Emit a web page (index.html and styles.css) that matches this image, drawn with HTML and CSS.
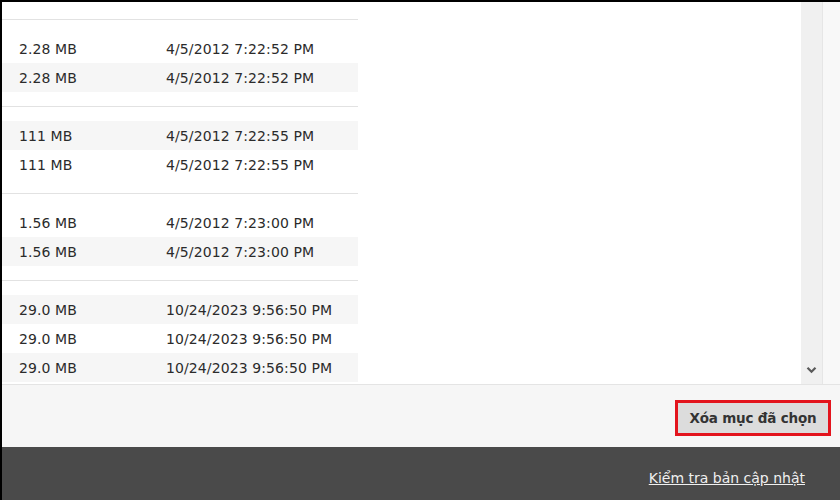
FILE: index.html
```html
<!DOCTYPE html>
<html lang="vi">
<head>
    <meta charset="UTF-8">
    <title>Xóa bản cập nhật</title>
    <link rel="stylesheet" href="styles.css">
</head>
<body>
    <div class="window">
        <div class="list-wrap">
            <div class="list">
                <div class="list-top"></div>

                <div class="group">
                    <div class="row"><span>2.28 MB</span><span>4/5/2012 7:22:52 PM</span></div>
                    <div class="row alt"><span>2.28 MB</span><span>4/5/2012 7:22:52 PM</span></div>
                </div>

                <div class="group">
                    <div class="row alt"><span>111 MB</span><span>4/5/2012 7:22:55 PM</span></div>
                    <div class="row"><span>111 MB</span><span>4/5/2012 7:22:55 PM</span></div>
                </div>

                <div class="group">
                    <div class="row"><span>1.56 MB</span><span>4/5/2012 7:23:00 PM</span></div>
                    <div class="row alt"><span>1.56 MB</span><span>4/5/2012 7:23:00 PM</span></div>
                </div>

                <div class="group last">
                    <div class="row alt"><span>29.0 MB</span><span>10/24/2023 9:56:50 PM</span></div>
                    <div class="row"><span>29.0 MB</span><span>10/24/2023 9:56:50 PM</span></div>
                    <div class="row alt"><span>29.0 MB</span><span>10/24/2023 9:56:50 PM</span></div>
                </div>
            </div>
            <div class="scrollbar">
                <svg class="arrow" width="11" height="8" viewBox="0 0 11 8">
                    <path d="M1.5 1.8 L5.5 5.8 L9.5 1.8" fill="none" stroke="#5a5a5a" stroke-width="2.2"/>
                </svg>
            </div>
        </div>

        <div class="actions">
            <button type="button" class="btn-delete">Xóa mục đã chọn</button>
        </div>

        <div class="footer">
            <a href="#" class="update-link">Kiểm tra bản cập nhật</a>
        </div>
    </div>
</body>
</html>
```

FILE: styles.css
```css
html, body { margin: 0; padding: 0; }
body { width: 840px; height: 500px; overflow: hidden; font-family: "DejaVu Sans", Tahoma, sans-serif; font-size: 14px; color: #2b2b2b; background: #f6f6f6; }

.window { height: 498px; border-top: 2px solid #000; border-left: 2px solid #000; display: flex; flex-direction: column; }

.list-wrap { display: flex; height: 382px; background: #f8f8f8; border-bottom: 1px solid #e4e4e4; }
.list { width: 799px; background: #fff; overflow: hidden; }
.list-top { height: 17px; }

.group { border-top: 1px solid #e2e2e2; width: 356px; padding: 14px 0; }
.group.last { padding-bottom: 0; }

.row { display: grid; grid-template-columns: 147px 1fr; height: 29px; align-items: center; padding-left: 17px; letter-spacing: 0.1px; }
.row.alt { background: #f6f6f6; }

.scrollbar { width: 22px; background: #f0f0f0; border-right: 1px solid #e6e6e6; display: flex; flex-direction: column; justify-content: flex-end; align-items: center; padding-bottom: 10px; box-sizing: border-box; }
.arrow { display: block; }

.actions { height: 62px; display: flex; justify-content: flex-end; align-items: flex-start; padding: 15px 9px 0 0; box-sizing: border-box; background: #f6f6f6; }
.btn-delete { width: 156px; height: 36px; border: 3px solid #e3141d; background: #dcdcdc; font-family: "DejaVu Sans", Tahoma, sans-serif; font-size: 13.5px; font-weight: bold; color: #333; padding: 0; letter-spacing: -0.2px; }

.footer { flex: 1; background: #4a4a4a; display: flex; justify-content: flex-end; align-items: flex-end; padding: 0 35px 14px 0; }
.update-link { color: #f0f0f0; font-size: 14px; text-decoration: underline; }
```
